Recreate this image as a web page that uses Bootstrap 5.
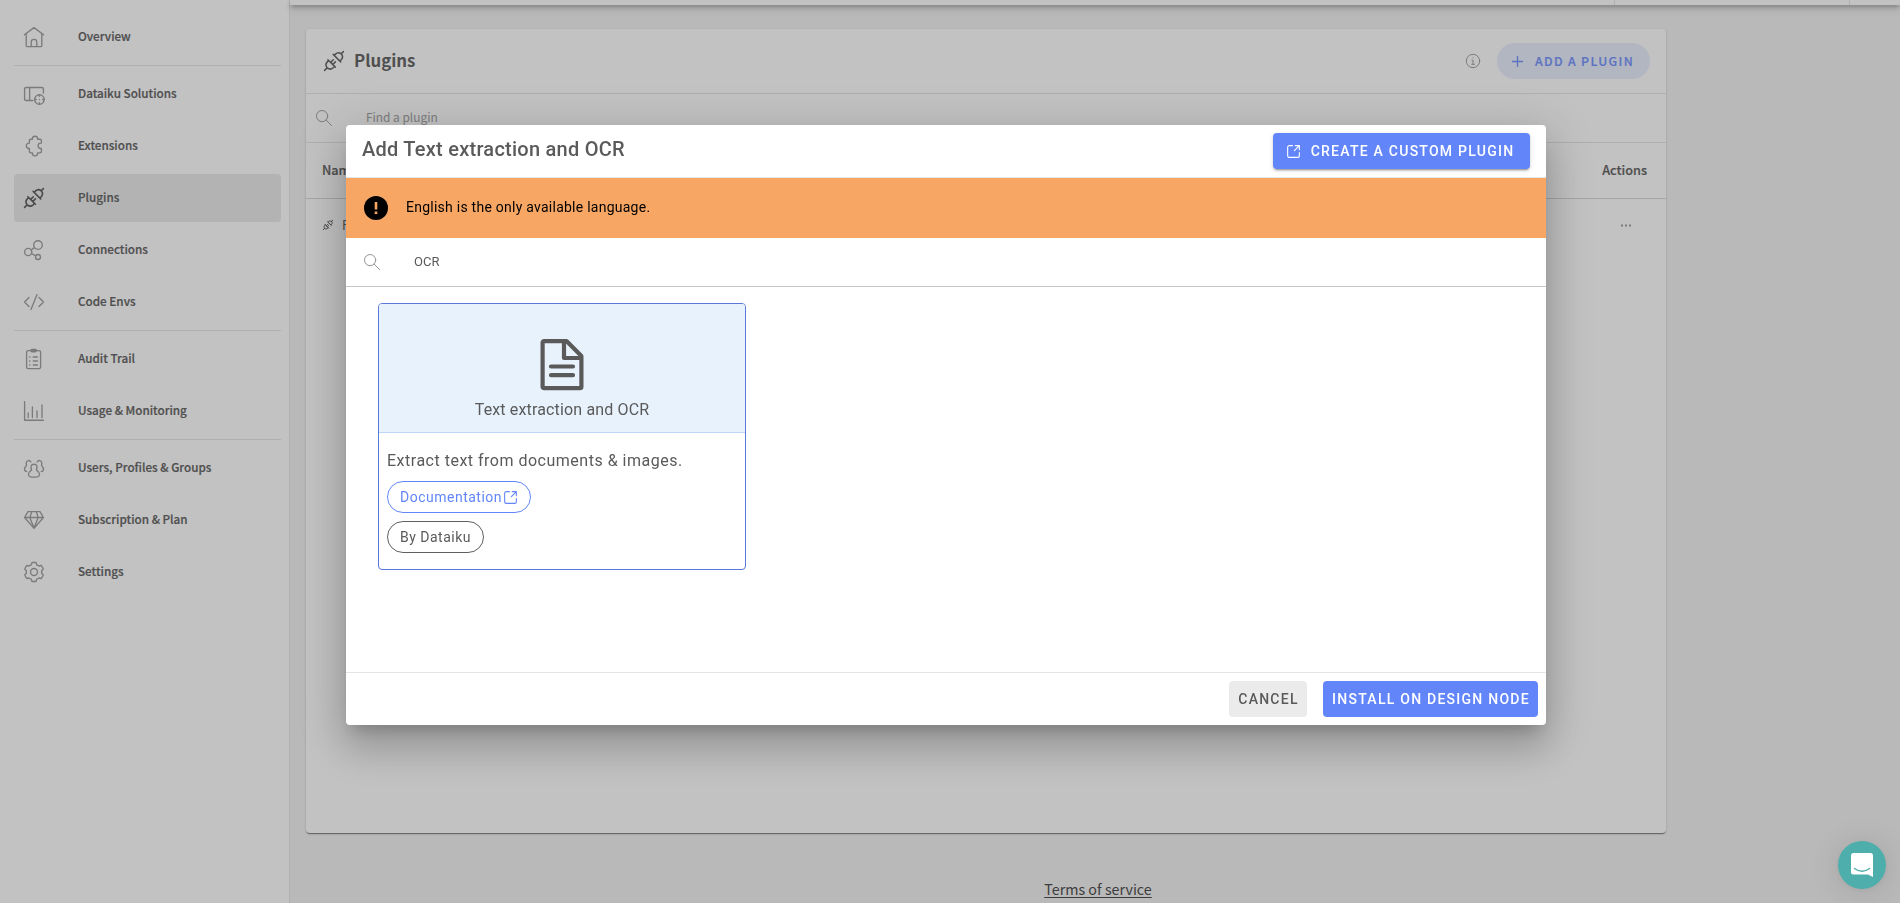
<!DOCTYPE html>
<html lang="en">
<head>
<meta charset="utf-8">
<meta name="viewport" content="width=device-width, initial-scale=1">
<title>Plugins</title>
<link href="https://cdn.jsdelivr.net/npm/bootstrap@5.3.0/dist/css/bootstrap.min.css" rel="stylesheet">
<style>
  :root { --sans: "Noto Sans CJK JP", "Noto Sans", sans-serif; --rbt: Roboto, "Liberation Sans", sans-serif; }
  body { font-family: var(--sans); background: #b9b9b9; color: #4f4f4f; height: 903px; overflow: hidden; line-height: 1; }
  svg { display: block; flex: none; fill: none; stroke: currentColor; stroke-linecap: round; stroke-linejoin: round; }
  .solid { stroke: none; }
  .faint { color: #7c7c7c; }
  .fainter { color: #959595; }

  .sidebar { width: 290px; background: #c2c2c2; border-right: 1px solid #b0b0b0; padding: 13px 8px 0 14px; gap: 4px; }
  .side-item { height: 48px; gap: 32px; padding: 0 0 0 8px; border-radius: 4px; color: #4f4f4f; font-size: 11.7px; font-weight: 500; text-decoration: none; white-space: nowrap; }
  .side-item svg { color: #7b7b7b; stroke-width: 1.35; }
  .side-item span { margin-top: -3px; -webkit-text-stroke: .2px currentColor; }
  .side-item.current { background: #b3b3b3; }
  .side-item.current svg { color: #4a4a4a; stroke-width: 1.6; }
  .side-rule { height: 1px; background: #b0b0b0; }

  .topbar { height: 5px; background: #c2c2c2; box-shadow: 0 2px 4px -1px rgba(0,0,0,.36), 0 4px 7px rgba(0,0,0,.14); padding-right: 50px; }
  .topbar i { width: 1px; margin-left: 234px; background: #b0b0b0; }
  .panel { width: 1360px; height: 804px; margin: 24px 0 0 16px; background: #c2c2c2; border-radius: 4px; box-shadow: 0 2px 1px -1px rgba(0,0,0,.3), 0 1px 1px rgba(0,0,0,.18), 0 1px 3px rgba(0,0,0,.12); }
  .panel-top { height: 65px; border-bottom: 1px solid #afafaf; padding: 0 16px 0 16px; }
  .panel-name { font-size: 16.8px; font-weight: 700; color: #4f4f4f; margin: -2px 0 0 8px; }
  .panel-find { height: 49px; border-bottom: 1px solid #afafaf; padding: 0 10px; gap: 34px; font-size: 11.9px; color: #7c7c7c; }
  .panel-find span { margin-top: -2px; }
  .panel-cols { height: 56px; border-bottom: 1px solid #a5a5a5; padding: 0 19px 0 16px; font-size: 12.7px; font-weight: 500; }
  .panel-cols span, .add-btn span { -webkit-text-stroke: .2px currentColor; }
  .panel-line { height: 53px; padding: 0 35px 1px 16px; font-size: 12.7px; gap: 8px; }
  .add-btn { height: 36px; width: 153px; border-radius: 18px; background: #b2b6c1; color: #5b73c2; font-size: 12.3px; font-weight: 500; letter-spacing: 1.35px; padding-left: 15px; gap: 12px; white-space: nowrap; }
  .terms { color: #3d3d3d; font-size: 14.3px; text-underline-offset: 2px; margin-top: 46px; padding-left: 6px; line-height: 20px; }

  .modal { font-family: var(--rbt); }
  .modal-dialog { width: 1200px; max-width: none; margin: 125px auto 0 346px; }
  .modal-content { height: 600px; border: 0; border-radius: 4px; overflow: visible; color: #5a5a5a; box-shadow: 0 11px 15px -7px rgba(0,0,0,.2), 0 24px 38px 3px rgba(0,0,0,.14), 0 9px 46px 8px rgba(0,0,0,.12); }
  .modal-header { height: 53px; padding: 0 16px; border-bottom: 1px solid #e4e4e4; }
  .modal-title { font-size: 20px; font-weight: 500; letter-spacing: .25px; line-height: 24px; margin-top: -4px; }
  .btn-flat { height: 36px; border-radius: 4px; border: 0; padding: 0 0 0 1px; font-size: 14px; font-weight: 500; letter-spacing: 1.25px; line-height: 36px; white-space: nowrap; }
  .btn-blue, .btn-blue:hover { background: #6286fa; color: #fff; }
  .btn-create { width: 257px; gap: 11px; padding: 0 2px 0 0; box-shadow: 0 3px 1px -2px rgba(0,0,0,.2), 0 2px 2px rgba(0,0,0,.14), 0 1px 5px rgba(0,0,0,.12); }
  .warn { height: 60px; background: #f8a664; color: #000; font-size: 14px; letter-spacing: .25px; padding-left: 18px; gap: 18px; }
  .warn span { margin-top: -2px; }
  .find { height: 49px; border-bottom: 1px solid #c6c6c6; padding-left: 18px; gap: 34px; font-size: 13px; }
  .find span { margin-top: -2px; }
  .modal-body { padding: 16px 32px; }
  .plug-card { width: 368px; height: 267px; border: 1px solid #5a78d8; border-radius: 4px; overflow: hidden; }
  .plug-head { height: 129px; background: #e8f2fd; border-bottom: 1px solid #bdd6f8; padding-top: 34px; font-size: 16px; letter-spacing: .15px; }
  .plug-text { padding: 19px 8px 0; }
  .plug-desc { font-size: 16px; letter-spacing: .5px; line-height: 18px; margin-bottom: 11px; }
  .pill { width: max-content; height: 32px; border: 1px solid #5f5f5f; border-radius: 16px; padding: 0 12px; font-size: 14px; letter-spacing: .5px; margin-bottom: 8px; }
  .pill-link { border-color: #6286fa; color: #6286fa; gap: 2px; padding-right: 13px; }
  .modal-footer { height: 53px; border-top: 1px solid #e4e4e4; padding: 0 8px; gap: 16px; }
  .modal-footer > * { margin: 0; }
  .btn-cancel { width: 78px; background: #ebebeb; color: #5a5a5a; }
  .btn-install { width: 215px; }

  .chat { position: fixed; right: 14px; bottom: 14px; width: 48px; height: 48px; border-radius: 50%; background: #4eaeab; z-index: 1060; box-shadow: 0 1px 6px rgba(0,0,0,.06), 0 2px 32px rgba(0,0,0,.12); }
</style>
</head>
<body>
<!-- shared symbols -->
<svg width="0" height="0" class="position-absolute">
  <symbol id="plug" viewBox="0 0 24 24">
    <path d="M2.600 21.400 5.200 18.800M5.200 18.800C3.600 16.900 3.600 14.600 5.300 12.900L6.700 11.500 12.600 17.300 11.200 18.800C9.400 20.400 7 20.400 5.200 18.800ZM5.900 10.700 13.400 18.200M8.700 13.400 11.300 10.800M10.800 15.500 13.400 12.900M21.400 2.600 19.200 4.800M19.200 4.800C17.400 3.300 15 3.600 13.400 5.100L12 6.300 17.900 12.200 19.200 10.800C20.800 9 20.800 6.500 19.200 4.800ZM11.200 5.400 18.800 13"/>
  </symbol>
  <symbol id="lens" viewBox="0 0 16 16"><circle cx="6.100" cy="6.100" r="5.600"/><path d="m10.200 10.200 5.400 5.400"/></symbol>
  <symbol id="open" viewBox="0 0 12 12"><path d="M5 .6H2.100A1.500 1.500 0 0 0 .6 2.100v7.800a1.500 1.500 0 0 0 1.500 1.500h7.800a1.500 1.500 0 0 0 1.500-1.500V7M7.600.6h3.800v3.800M11.200.8 6.800 5.200"/></symbol>
</svg>

<div class="d-flex h-100">
  <nav class="sidebar d-flex flex-column flex-shrink-0">
    <a class="side-item d-flex align-items-center"><svg width="24" height="24"><path d="M2.400 9.800 12 2.600l9.600 7.200M4.200 8.600v12.200q0 .8.800.8h14q.8 0 .8-.8V8.600M9.200 21.400v-4.200a2.800 2.800 0 0 1 5.600 0v4.200"/></svg><span>Overview</span></a>
    <div class="side-rule"></div>
    <a class="side-item d-flex align-items-center"><svg width="24" height="24"><path d="M10.800 18.500H4.100a1.500 1.500 0 0 1-1.500-1.500V7a1.500 1.500 0 0 1 1.500-1.500h15.800A1.500 1.500 0 0 1 21.400 7v4M7.600 5.700v12.600"/><circle cx="17.400" cy="17.500" r="4.800"/><path d="M17.400 12.900v1.400M17.400 20.700v1.400M12.800 17.500h1.400M20.600 17.500H22M17.400 17.400v.2"/></svg><span>Dataiku Solutions</span></a>
    <a class="side-item d-flex align-items-center"><svg width="24" height="24"><path d="M10.400 5.200V4.800a2.600 2.600 0 0 1 5.200 0v.4H18q1.400 0 1.400 1.400v2.500h-.6a2.700 2.700 0 0 0 0 5.400h.6v3q0 1.400-1.400 1.400h-2.400v.4a2.600 2.600 0 0 1-5.200 0v-.4H8.800q-1.400 0-1.400-1.400v-3H7a2.600 2.600 0 0 1 0-5.400h.4V6.600q0-1.400 1.400-1.400Z"/></svg><span>Extensions</span></a>
    <a class="side-item current d-flex align-items-center"><svg width="24" height="24"><use href="#plug"/></svg><span>Plugins</span></a>
    <a class="side-item d-flex align-items-center"><svg width="24" height="24"><circle cx="16" cy="7" r="4.300"/><circle cx="6.200" cy="14" r="3.600"/><circle cx="16" cy="19" r="2.500"/><path d="m9.200 12 3.300-2.400M9.500 15.500l4.200 2.300"/></svg><span>Connections</span></a>
    <a class="side-item d-flex align-items-center"><svg width="24" height="24"><path d="m7 7.500-4.500 4.500L7 16.500M17 7.500l4.500 4.500-4.500 4.500M15 4.600 9 19.500"/></svg><span>Code Envs</span></a>
    <div class="side-rule"></div>
    <a class="side-item d-flex align-items-center"><svg width="24" height="24"><rect x="4.600" y="3.600" width="14" height="18" rx="1.600"/><path d="M8.800 3.600q0-1.100 1-1.100h3.600q1 0 1 1.100t-1 1.100H9.800q-1 0-1-1.100Z"/><path d="M7.600 10h.3M7.600 14h.3M7.600 18h.3M11.200 10h4.200M11.200 14h4.200M11.200 18h4.200"/></svg><span>Audit Trail</span></a>
    <a class="side-item d-flex align-items-center"><svg width="24" height="24"><path d="M2.600 2.600v18.600h18.800M6.200 14v4.500M10.400 8v10.500M15 12v6.500M20 6v12.500"/></svg><span>Usage &amp; Monitoring</span></a>
    <div class="side-rule"></div>
    <a class="side-item d-flex align-items-center"><svg width="24" height="24"><path d="M9.600 14C8.300 10.500 9 8.200 12 8.200s3.700 2.300 2.400 5.800c2.200 1.500 3.200 3 3 5q-.2 1.700-2 1.900-3.400.4-6.800 0-1.800-.2-2-1.900c-.2-2 .8-3.500 3-5ZM8.900 6C8 4.600 7 4.400 6.200 4.600 4.200 5 3.900 6.800 4.500 9.200c-1.700 1.700-2.300 3.200-1.800 5q.4 1.300 2 1.300M15.100 6c.9-1.400 1.900-1.600 2.700-1.400 2 .4 2.300 2.200 1.700 4.600 1.700 1.700 2.300 3.200 1.800 5q-.4 1.300-2 1.300"/></svg><span>Users, Profiles &amp; Groups</span></a>
    <a class="side-item d-flex align-items-center"><svg width="24" height="24"><path d="M6 3.600h12l3.400 5.900L12 20.400 2.600 9.500ZM2.600 9.500h18.800M9.800 3.600 7.800 9.500 12 20l4.200-10.500-2-5.900"/></svg><span>Subscription &amp; Plan</span></a>
    <a class="side-item d-flex align-items-center"><svg width="24" height="24"><circle cx="12" cy="12" r="3.500"/><path d="M10.500 2.500h3q.6 0 .7.500l.5 1.800q1.300.4 2.300 1.300l1.600-.6q.6-.1.900.3l1.600 2.700q.3.500-.1.900l-1.400 1.300q.3 1.300 0 2.600l1.400 1.300q.4.400.1.900l-1.600 2.700q-.3.400-.9.300l-1.600-.6q-1 .9-2.300 1.300l-.5 1.800q-.1.500-.7.500h-3q-.6 0-.7-.5l-.5-1.800q-1.300-.4-2.300-1.300l-1.600.6q-.6.100-.9-.3l-1.600-2.700q-.3-.5.100-.9l1.400-1.300q-.3-1.300 0-2.600L3 9.400q-.4-.4-.1-.9l1.600-2.700q.3-.4.900-.3l1.600.6q1-.9 2.300-1.300l.5-1.800q.1-.5.700-.5Z"/></svg><span>Settings</span></a>
  </nav>

  <main class="flex-grow-1 d-flex flex-column">
    <div class="topbar d-flex justify-content-end"><i></i><i></i></div>
    <section class="panel flex-shrink-0">
      <div class="panel-top d-flex align-items-center">
        <svg width="24" height="24" stroke-width="1.500"><use href="#plug"/></svg>
        <div class="panel-name">Plugins</div>
        <svg class="ms-auto me-3 faint" width="16" height="16"><circle cx="8" cy="8" r="6.700"/><path d="M7 7.200h1v4M6.700 11.300h2.700M8 4.800v.1"/></svg>
        <div class="add-btn d-flex align-items-center"><svg width="11" height="11" stroke-width="1.300"><path d="M5.500.5v10M.5 5.500h10"/></svg><span>ADD A PLUGIN</span></div>
      </div>
      <div class="panel-find d-flex align-items-center"><svg width="16" height="16"><use href="#lens"/></svg><span>Find a plugin</span></div>
      <div class="panel-cols d-flex align-items-center justify-content-between"><span>Name</span><span>Actions</span></div>
      <div class="panel-line d-flex align-items-center"><svg width="12" height="12" stroke-width="2"><use href="#plug"/></svg><span>Forecast</span><svg class="ms-auto solid" width="10" height="3"><path fill="#7c7c7c" d="M0 .5h2v2H0zM4 .5h2v2H4zM8 .5h2v2H8z"/></svg></div>
    </section>
    <footer class="terms text-center text-decoration-underline">Terms of service</footer>
  </main>
</div>

<div class="modal d-block overflow-hidden" role="dialog">
  <div class="modal-dialog">
    <div class="modal-content">
      <div class="modal-header">
        <h1 class="modal-title">Add Text extraction and OCR</h1>
        <button class="btn btn-flat btn-blue btn-create d-flex align-items-center justify-content-center"><svg width="13" height="13"><use href="#open"/></svg>CREATE A CUSTOM PLUGIN</button>
      </div>
      <div class="warn d-flex align-items-center"><svg class="solid" width="24" height="24"><circle cx="12" cy="12" r="12" fill="#000"/><path fill="#f8a664" d="M10.700 6h2.600v7.500h-2.600zM10.700 15.500h2.600v2.600h-2.600z"/></svg><span>English is the only available language.</span></div>
      <div class="find d-flex align-items-center"><svg class="fainter" width="16" height="16"><use href="#lens"/></svg><span>OCR</span></div>
      <div class="modal-body">
        <div class="plug-card">
          <div class="plug-head d-flex flex-column align-items-center">
            <svg class="mb-2" width="44" height="56" stroke-width="4.200"><path d="M4.100 3.100H26.500L41.400 18V48.700a1.500 1.500 0 0 1-1.500 1.500H4.100a1.500 1.500 0 0 1-1.500-1.500V4.600a1.500 1.500 0 0 1 1.500-1.500ZM24 4v16h16.500M11 28.500h22M11 37.200h22"/></svg>
            Text extraction and OCR
          </div>
          <div class="plug-text">
            <p class="plug-desc">Extract text from documents &amp; images.</p>
            <div class="pill pill-link d-flex align-items-center">Documentation<svg width="13" height="13"><use href="#open"/></svg></div>
            <div class="pill d-flex align-items-center">By Dataiku</div>
          </div>
        </div>
      </div>
      <div class="modal-footer">
        <button class="btn btn-flat btn-cancel">CANCEL</button>
        <button class="btn btn-flat btn-blue btn-install">INSTALL ON DESIGN NODE</button>
      </div>
    </div>
  </div>
</div>

<div class="chat d-flex align-items-center justify-content-center"><svg class="solid" width="22" height="24"><path fill="#fff" d="M2.500 0h17A2.500 2.500 0 0 1 22 2.500V24l-5-2.500H2.500A2.500 2.500 0 0 1 0 19V2.500A2.500 2.500 0 0 1 2.500 0Z"/><path stroke="#4eaeab" stroke-width="1.400" d="M3.500 15.500q7.500 5.500 15 0"/></svg></div>
<script src="https://cdn.jsdelivr.net/npm/bootstrap@5.3.0/dist/js/bootstrap.bundle.min.js"></script>
</body>
</html>
